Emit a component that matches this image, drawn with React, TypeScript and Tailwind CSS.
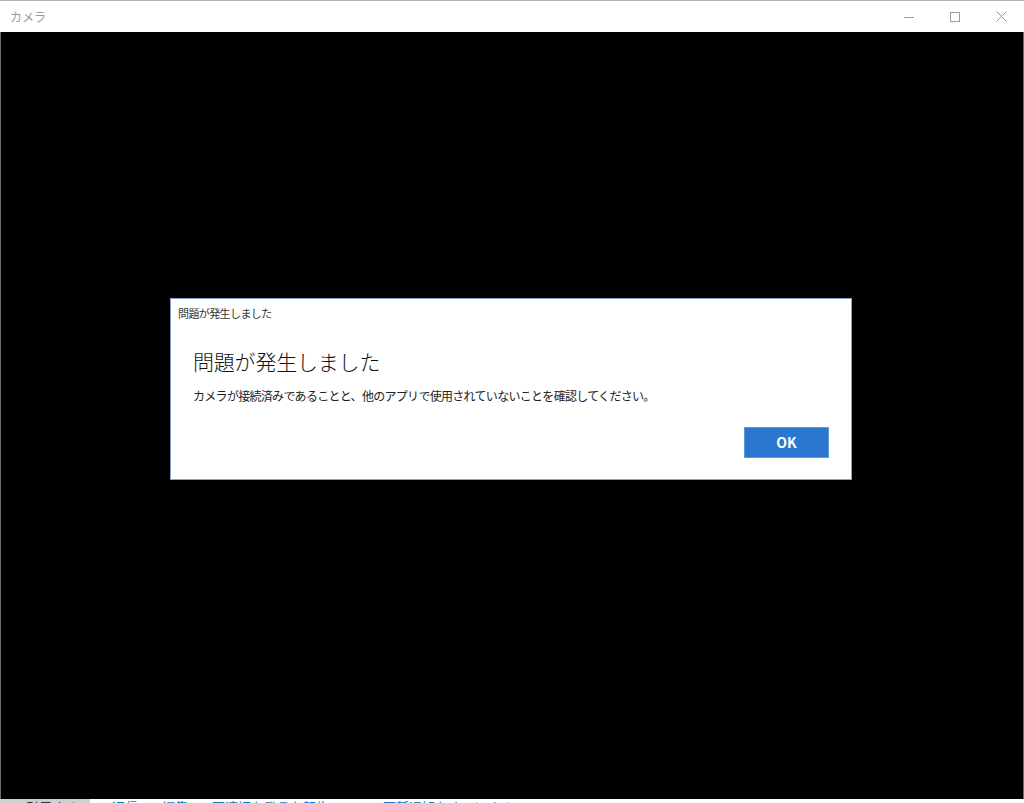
import React from 'react';

const jp = { fontFamily: '"Noto Sans CJK JP", "Noto Sans", sans-serif' };

function TitleBar() {
  return (
    <div className="flex h-[32px] shrink-0 items-center border-t border-[#b4b4b4] bg-white">
      <p className="flex-1 pl-[10px] text-[12px] text-[#9a9a9a]">カメラ</p>
      <div className="flex h-full">
        <button className="flex w-[46px] items-center justify-center">
          <svg width="10" height="10" viewBox="0 0 10 10" stroke="#9a9a9a" fill="none">
            <line x1="0" y1="5.5" x2="10" y2="5.5" />
          </svg>
        </button>
        <button className="flex w-[46px] items-center justify-center">
          <svg width="10" height="10" viewBox="0 0 10 10" stroke="#9a9a9a" fill="none">
            <rect x="0.5" y="0.5" width="9" height="9" />
          </svg>
        </button>
        <button className="flex w-[46px] items-center justify-center">
          <svg width="11" height="11" viewBox="0 0 11 11" stroke="#9a9a9a" fill="none">
            <line x1="0.5" y1="0.5" x2="10.5" y2="10.5" />
            <line x1="10.5" y1="0.5" x2="0.5" y2="10.5" />
          </svg>
        </button>
      </div>
    </div>
  );
}

function ErrorDialog() {
  return (
    <div className="flex h-[182px] w-[682px] flex-col border border-[#8da3c4] bg-white">
      <p className="pl-[7px] pt-[7px] text-[11px] leading-[14px] tracking-[-0.6px] text-[#333]">問題が発生しました</p>
      <div className="flex flex-col pl-[22px] pr-[22px]">
        <h1 className="mt-[27px] text-[21px] font-light leading-[28px] tracking-[-0.2px] text-[#111]">問題が発生しました</h1>
        <p className="mt-[13px] text-[12px] leading-[16px] tracking-[-0.7px] text-[#222]">
          カメラが接続済みであることと、他のアプリで使用されていないことを確認してください。
        </p>
        <div className="mt-[23px] flex justify-end">
          <button className="h-[31px] w-[85px] border border-[#5c9be0] bg-[#2b77d0] text-[14px] font-bold text-white">OK</button>
        </div>
      </div>
    </div>
  );
}

function BottomStrip() {
  return (
    <div className="flex h-[4px] shrink-0 overflow-hidden bg-white">
      <div className="flex h-full w-[90px] items-start bg-[#cfcfcf] pl-[26px]">
        <span className="text-[13px] leading-[16px] text-[#333]">引用する</span>
      </div>
      <div className="flex items-start gap-[24px] pl-[22px] text-[13px] leading-[16px] text-[#1a6fc9]">
        <span>返信</span>
        <span>編集</span>
        <span>不適切な発言を報告</span>
        <span className="pl-[30px]">更新通知をオフにする</span>
      </div>
    </div>
  );
}

export default function App() {
  return (
    <div className="flex h-[803px] w-[1024px] flex-col overflow-hidden bg-white" style={jp}>
      <TitleBar />
      <div className="flex flex-1 items-start border-x border-[#6e6e6e] bg-black pl-[169px] pt-[266px]">
        <ErrorDialog />
      </div>
      <BottomStrip />
    </div>
  );
}
